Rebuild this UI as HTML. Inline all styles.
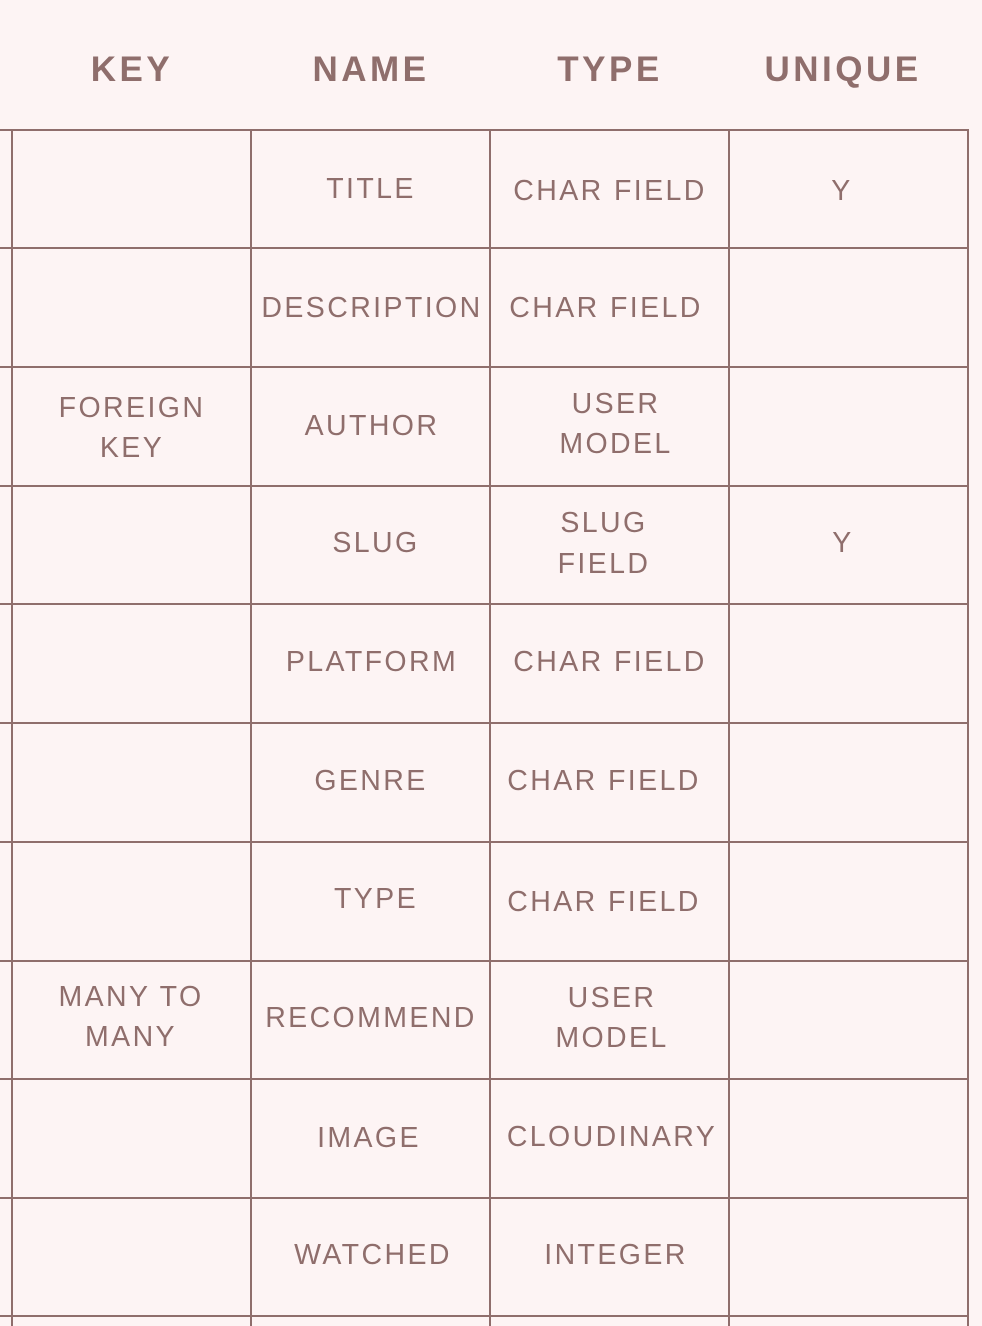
<!DOCTYPE html>
<html><head><meta charset="utf-8"><style>
body{margin:0;width:982px;height:1326px;background:#fdf4f4;position:relative;overflow:hidden;font-family:"Liberation Sans",sans-serif;color:#8f6e6c}
.h{position:absolute;height:2px;background:#8f6e6c;left:0;width:969px}
.v{position:absolute;width:2px;background:#8f6e6c;top:129px;height:1197px}
.t{position:absolute;width:300px;text-align:center;white-space:nowrap;font-size:28.5px;letter-spacing:2.4px;line-height:40px}
.b{font-weight:bold;font-size:35px;letter-spacing:3.5px}
</style></head><body>
<div class="h" style="top:129px"></div><div class="h" style="top:247px"></div><div class="h" style="top:366px"></div><div class="h" style="top:485px"></div><div class="h" style="top:603px"></div><div class="h" style="top:722px"></div><div class="h" style="top:841px"></div><div class="h" style="top:960px"></div><div class="h" style="top:1078px"></div><div class="h" style="top:1197px"></div><div class="h" style="top:1315px"></div>
<div class="v" style="left:11px"></div><div class="v" style="left:250px"></div><div class="v" style="left:489px"></div><div class="v" style="left:728px"></div><div class="v" style="left:967px"></div>

<div class="t b" style="left:-18px;top:50px">KEY</div>
<div class="t b" style="left:221px;top:50px">NAME</div>
<div class="t b" style="left:460px;top:50px">TYPE</div>
<div class="t b" style="left:693px;top:50px">UNIQUE</div>

<div class="t" style="left:221px;top:169px">TITLE</div>
<div class="t" style="left:460px;top:171px">CHAR FIELD</div>
<div class="t" style="left:692px;top:171px">Y</div>

<div class="t" style="left:222px;top:288px">DESCRIPTION</div>
<div class="t" style="left:456px;top:288px">CHAR FIELD</div>

<div class="t" style="left:-18px;top:388px">FOREIGN<br>KEY</div>
<div class="t" style="left:222px;top:406px">AUTHOR</div>
<div class="t" style="left:466px;top:384px">USER<br>MODEL</div>

<div class="t" style="left:226px;top:523px">SLUG</div>
<div class="t" style="left:454px;top:523px;line-height:41px;margin-top:-20px">SLUG<br>FIELD</div>
<div class="t" style="left:693px;top:523px">Y</div>

<div class="t" style="left:222px;top:642px">PLATFORM</div>
<div class="t" style="left:460px;top:642px">CHAR FIELD</div>

<div class="t" style="left:221px;top:761px">GENRE</div>
<div class="t" style="left:454px;top:761px">CHAR FIELD</div>

<div class="t" style="left:226px;top:879px">TYPE</div>
<div class="t" style="left:454px;top:882px">CHAR FIELD</div>

<div class="t" style="left:-19px;top:977px">MANY TO<br>MANY</div>
<div class="t" style="left:221px;top:998px">RECOMMEND</div>
<div class="t" style="left:462px;top:978px">USER<br>MODEL</div>

<div class="t" style="left:219px;top:1118px">IMAGE</div>
<div class="t" style="left:462px;top:1117px">CLOUDINARY</div>

<div class="t" style="left:223px;top:1235px">WATCHED</div>
<div class="t" style="left:466px;top:1235px">INTEGER</div>
</body></html>
